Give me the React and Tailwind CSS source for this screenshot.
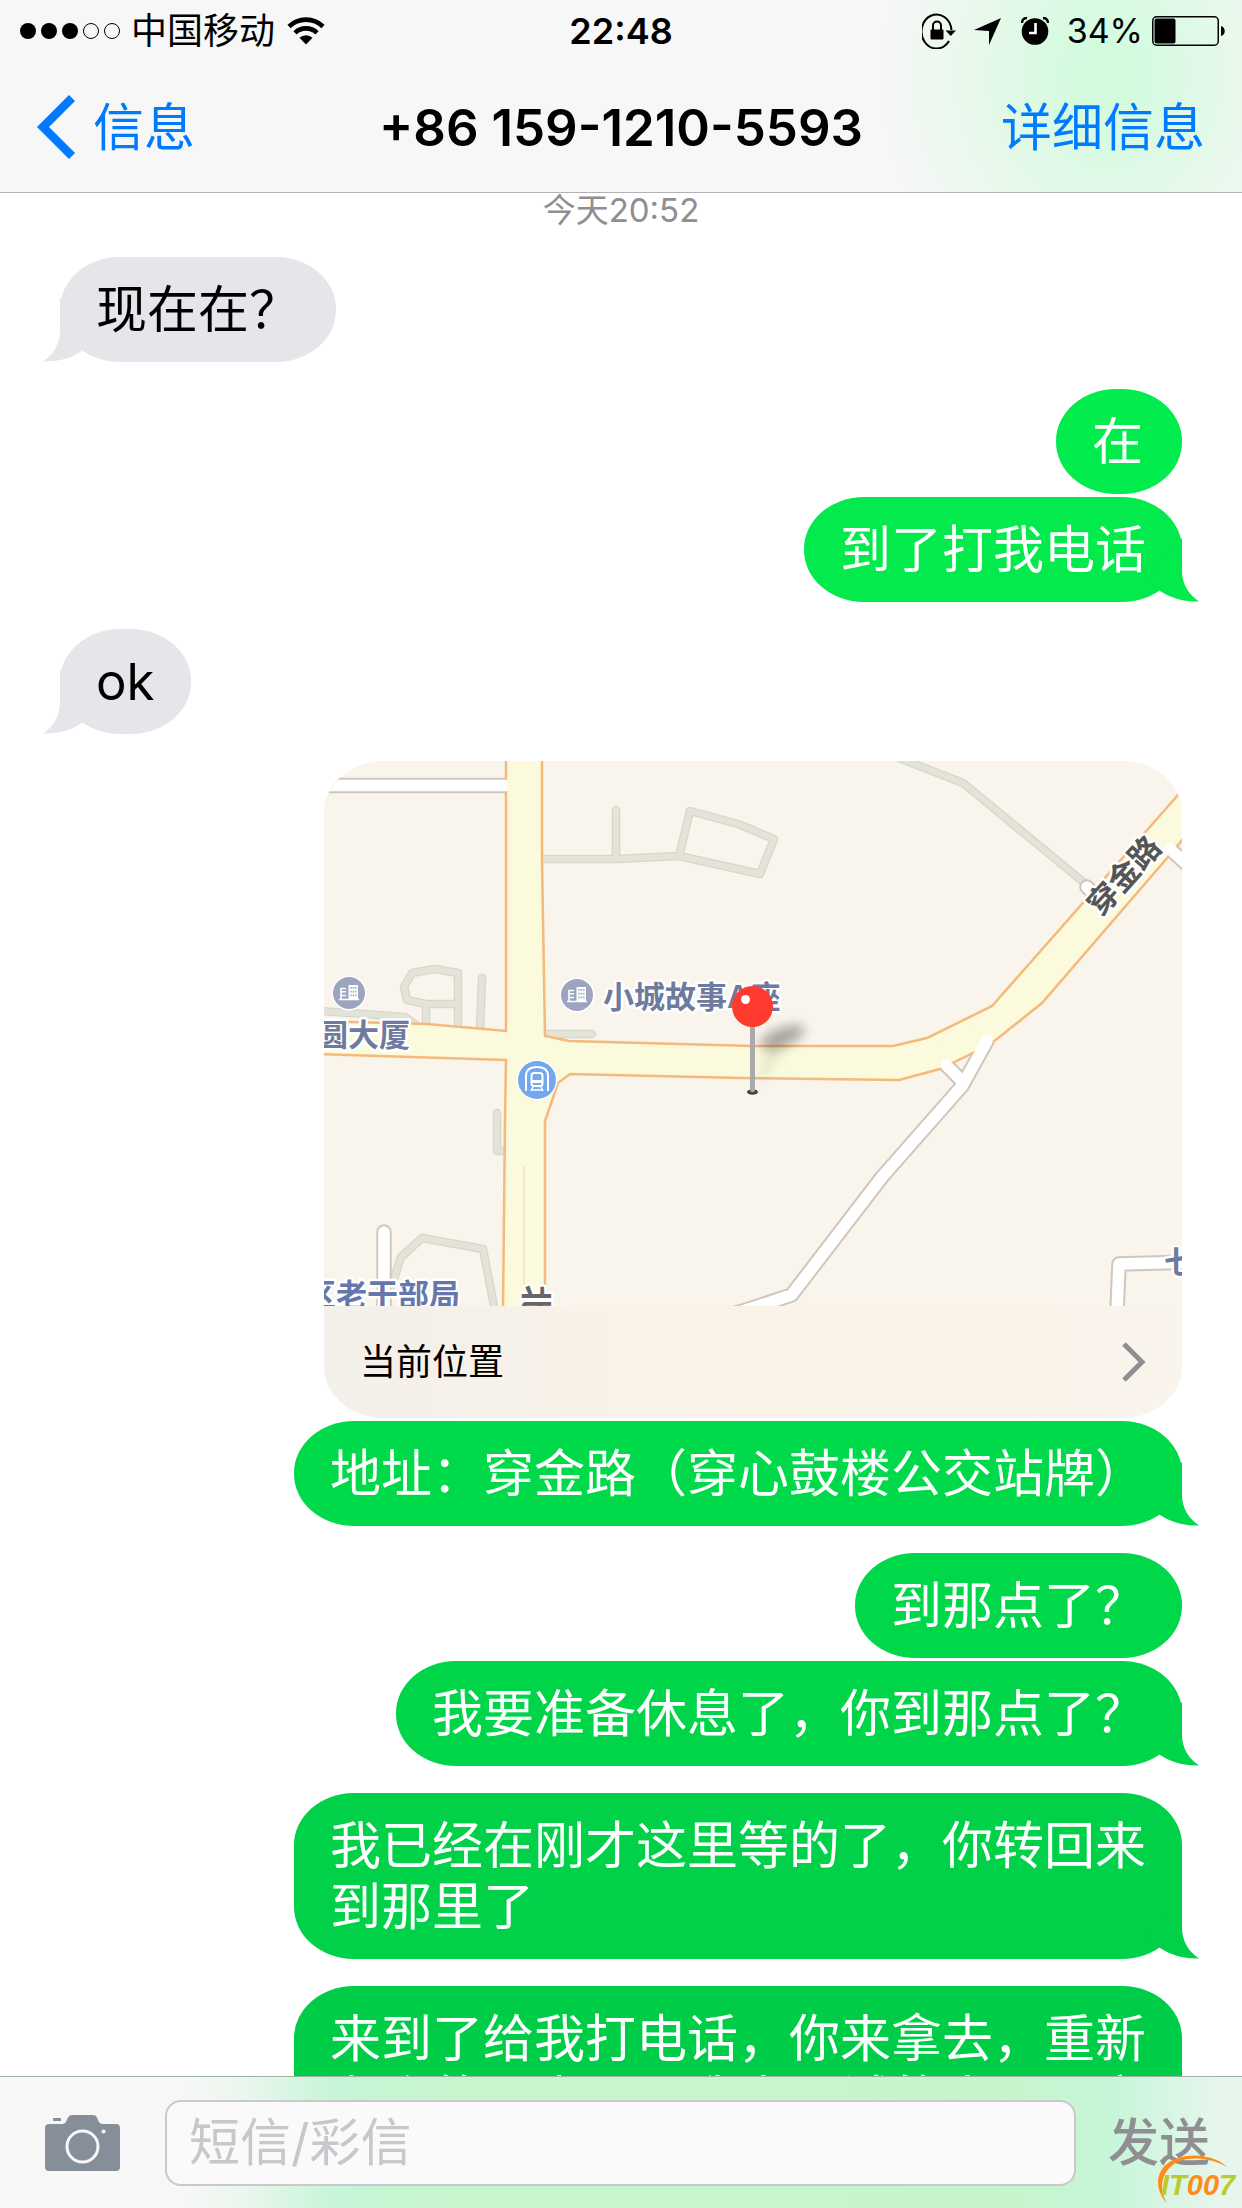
import { useState } from 'react';

const mensajes = [
  { id: 1, de: 'otro', texto: '现在在？', cola: true, color: 'text-[#e5e5ea]', margen: 'mt-[27px]' },
  { id: 2, de: 'yo', texto: '在', color: 'text-[#02ec4d]', margen: 'mt-[27px]' },
  { id: 3, de: 'yo', texto: '到了打我电话', cola: true, color: 'text-[#02ea4c]', margen: 'mt-[3px]' },
  { id: 4, de: 'otro', texto: 'ok', cola: true, color: 'text-[#e5e5ea]', margen: 'mt-[27px]' },
  { id: 5, de: 'yo', mapa: true, texto: '当前位置', margen: 'mt-[27px]' },
  { id: 6, de: 'yo', texto: '地址：穿金路（穿心鼓楼公交站牌）', cola: true, color: 'text-[#00da4a]', margen: 'mt-[3px]' },
  { id: 7, de: 'yo', texto: '到那点了？', color: 'text-[#00d749]', margen: 'mt-[27px]' },
  { id: 8, de: 'yo', texto: '我要准备休息了，你到那点了？', cola: true, color: 'text-[#00d549]', margen: 'mt-[3px]' },
  { id: 9, de: 'yo', texto: '我已经在刚才这里等的了，你转回来到那里了', cola: true, color: 'text-[#00d148]', margen: 'mt-[27px]' },
  { id: 10, de: 'yo', texto: '来到了给我打电话，你来拿去，重新在个的了点了，我来，试的来了，方', cola: true, color: 'text-[#00cd47]', margen: 'mt-[27px]' },
];

const StatusBar = () => (
  <div className="grid h-[62px] grid-cols-[1fr_auto_1fr] items-center px-[16px] text-[36px] leading-[44px]">
    <div className="flex items-center gap-[9px] pl-[4px]">
      <svg className="h-[18px] w-[102px]" viewBox="0 0 102 18">
        <circle cx="8" cy="9" r="8" />
        <circle cx="29" cy="9" r="8" />
        <circle cx="50" cy="9" r="8" />
        <circle cx="71" cy="9" r="7.5" fill="none" stroke="#000" />
        <circle cx="92" cy="9" r="7.5" fill="none" stroke="#000" />
      </svg>
      <span>中国移动</span>
      <svg className="ml-[3px] h-[28px] w-[38px]" viewBox="0 0 38 28" fill="none" stroke="#000" strokeWidth="4.6">
        <path d="M2 9.5a24.5 24.5 0 0 1 34 0" />
        <path d="M8 15.8a16 16 0 0 1 22 0" />
        <path d="M12.5 20.8a9.4 9.4 0 0 1 13 0L19 27.5z" fill="#000" stroke="none" />
      </svg>
    </div>
    <span className="font-semibold">22:48</span>
    <div className="flex items-center justify-end">
      <svg className="h-[36px] w-[34px]" viewBox="0 0 34 36">
        <path d="M27 28A15 17 0 1 1 29.5 17" fill="none" stroke="#000" strokeWidth="2" />
        <path d="M23.5 17.500h10.500l-5.200 5.500z" />
        <rect x="8.500" y="16.500" width="13" height="10" rx="1" />
        <path d="M11 17v-4.500a4 4 0 0 1 8 0v4.500" fill="none" stroke="#000" strokeWidth="2" />
      </svg>
      <svg className="ml-[18px] h-[27px] w-[27px]" viewBox="0 0 27 27">
        <path d="M27 0L15 27V13L0 12z" />
      </svg>
      <svg className="ml-[20px] h-[28px] w-[28px]" viewBox="0 0 28 28">
        <circle cx="14" cy="14.5" r="13.3" />
        <path d="M1 6C1 3 3 1 6 1M27 6C27 3 25 1 22 1" fill="none" stroke="#000" strokeWidth="2.5" />
        <path d="M14.5 6v10H8" fill="none" stroke="#fff" strokeWidth="2.6" />
      </svg>
      <span className="ml-[18px] text-[34px]">34%</span>
      <svg className="ml-[9px] h-[30px] w-[74px]" viewBox="0 0 74 30">
        <rect x="0.75" y="0.75" width="65.5" height="28.5" rx="4" fill="none" stroke="#000" strokeWidth="1.5" />
        <rect x="2.5" y="2.5" width="21" height="25" rx="2" />
        <path d="M69 10c5 1.5 5 9 0 10z" />
      </svg>
    </div>
  </div>
);

const Cola = ({ de }) => (
  <svg
    className={`absolute bottom-0 h-[64px] w-[52px] fill-current ${de === 'yo' ? 'right-[-18px]' : 'left-[-18px] -scale-x-100'}`}
    viewBox="0 0 52 64"
  >
    <path d="M34 0V33C34 46 41 57 51 63.5C36 64 23 60 12 53L0 40z" />
  </svg>
);

const Edificio = ({ x, y }) => (
  <g transform={`translate(${x} ${y})`}>
    <circle r="17.5" fill="#fff" />
    <circle r="16" fill="#9ca4bf" />
    <path d="M-10 6.5H10M-8 6V-4.500H-3M-8 -1.200H-3M-8 2.500H-3" stroke="#fff" strokeWidth="1.6" fill="none" />
    <rect x="-0.5" y="-8" width="9.500" height="15" fill="#fff" />
    <path d="M2 -6v9.5M4.400 -6v9.5M6.800 -6v9.5" stroke="#9ca4bf" strokeWidth="1.4" strokeDasharray="1.8 1.9" />
  </g>
);

const senderos =
  'M218 98H292L355 95L436 113L450 78L414 63L366 50L355 95M292 98V49' +
  'M575 -3L639 22L763 124' +
  'M134 268V212L111 208L88 212L80 226L83 239L102 243H134M102 243V265' +
  'M158 217L156 268M-2 250L81 256L92 264M222 273H268M173 352V390H181' +
  'M66 530L77 496L98 477L159 488L171 550';
const calles =
  'M-12 24.5H190M663 280L638 325L558 416L467.5 534L425 548L380 562M622 304L640 322' +
  'M763 126L776 139M846 88L870 110M60 550V471M793 550L795 503L870 501';
const avenida =
  'M182 -5V270L103 263L-5 260V293L182 299L181 359L179 550H221V360L234 322L246 313L416 317L575 319L616 308L653 290L673 278L718 242L844 96L870 65V16L854 34L668 245L603 277L569 285H429L245 280L221 275L218 100V-5z';

const Mapa = () => (
  <svg className="block w-full" viewBox="0 0 858 545">
    <defs>
      <filter id="sombra" x="-50%" y="-80%" width="200%" height="260%">
        <feGaussianBlur stdDeviation="6" />
      </filter>
    </defs>
    <rect width="858" height="545" fill="#f9f4ec" />
    <g fill="none" strokeLinejoin="round" strokeLinecap="round">
      <path d={senderos} stroke="#d8d6c7" strokeWidth="8.5" />
      <path d={senderos} stroke="#e4e3da" strokeWidth="6" />
      <path d={calles} stroke="#d0c6bd" strokeWidth="15.5" />
    </g>
    <path d={avenida} fill="#fbfadd" stroke="#f5b97a" strokeWidth="2.5" />
    <path d={calles} fill="none" stroke="#fff" strokeWidth="11.5" strokeLinejoin="round" strokeLinecap="round" />
    <path d="M184 12H216V40H184zM640 285L664 270L690 258L700 235L670 256L600 285z" fill="#fbfadd" />
    <path d="M200 405V545" stroke="#f6e3b8" strokeWidth="1.5" />

    <Edificio x={25} y={232} />
    <Edificio x={253} y={234} />
    <g transform="translate(213 319)" fill="none" stroke="#fff" strokeWidth="2">
      <circle r="20.5" fill="#fff" stroke="none" />
      <circle r="19" fill="#74a8ee" stroke="none" />
      <path d="M-11 11V-4C-11 -10 -7 -13 0 -13S11 -10 11 -4V11" />
      <rect x="-5.5" y="-7" width="11" height="13" rx="2.5" />
      <path d="M-5 1.5H5" strokeWidth="3" />
      <path d="M-4 7L-6 11M4 7L6 11M-5 10H5" strokeWidth="1.5" />
    </g>

    <g fontSize="31" fontWeight="600" fill="#6f7b9e" stroke="#fff" strokeWidth="5" strokeLinejoin="round" paintOrder="stroke">
      <text x="279" y="247">小城故事A座</text>
      <text x="-7" y="285">圆大厦</text>
      <text x="-19" y="545" fill="#6677ad">区老干部局</text>
      <text x="840" y="512">七</text>
      <text transform="translate(201 524) rotate(90)" fill="#666">北京路</text>
      <text transform="translate(808 122) rotate(-48)" textAnchor="middle" fill="#555">穿金路</text>
    </g>

    <ellipse cx="458" cy="276" rx="24" ry="9" transform="rotate(-20 458 276)" fill="#000" opacity="0.32" filter="url(#sombra)" />
    <path d="M430 328L446 285L466 280z" fill="#000" opacity="0.1" filter="url(#sombra)" />
    <ellipse cx="428.5" cy="331" rx="5.5" ry="2.8" fill="#444" />
    <rect x="426" y="262" width="5" height="69" rx="2" fill="#aaaaae" />
    <circle cx="428.5" cy="245.5" r="20.5" fill="#ff3b30" />
    <circle cx="421.5" cy="238.5" r="4.5" fill="#fff" />
  </svg>
);

const TarjetaMapa = ({ texto }) => (
  <a href="#mapa" className="block w-[858px] max-w-full overflow-hidden rounded-[60px/52px] bg-[#f9f4ec]">
    <Mapa />
    <div className="flex h-[112px] items-center justify-between bg-linear-to-r from-[#f3f0ea] via-[#fbf3e8] to-[#f9f4ec] px-[36px]">
      <span className="text-[36px] leading-[44px]">{texto}</span>
      <svg className="h-[40px] w-[24px]" viewBox="0 0 24 40" fill="none" stroke="#8e8e93" strokeWidth="5">
        <path d="M2 2L20 20L2 38" />
      </svg>
    </div>
  </a>
);

const Burbuja = ({ m }) => (
  <div className={`relative max-w-[888px] min-w-[126px] rounded-[60px/52px] bg-current px-[36px] py-[22px] ${m.color}`}>
    <p className={`text-[51px] leading-[61px] ${m.de === 'yo' ? 'text-white' : 'text-black'}`}>{m.texto}</p>
    {m.cola && <Cola de={m.de} />}
  </div>
);

const App = () => {
  const [borrador, setBorrador] = useState('');

  return (
    <div className="flex h-screen flex-col overflow-hidden bg-white font-[Inter,'Noto_Sans_CJK_SC',sans-serif] text-black" lang="zh-CN">
      <header className="shrink-0 border-b border-[#b2b2b2] bg-[#f7f7f7] bg-[radial-gradient(230px_260px_at_89%_75px,#d2fbde_10%,#e4f9e9_50%,#f7f7f700)]">
        <StatusBar />
        <nav className="grid h-[130px] grid-cols-[1fr_auto_1fr] items-center px-[37px] text-[51px] leading-[61px]">
          <a href="#lista" className="flex items-center gap-[17px] text-[#007aff]">
            <svg className="h-[64px] w-[39px]" viewBox="0 0 39 64" fill="none" stroke="currentColor" strokeWidth="8.5">
              <path d="M35 3L6 32L35 61" />
            </svg>
            信息
          </a>
          <h1 className="font-semibold">+86 159-1210-5593</h1>
          <a href="#detalles" className="justify-self-end text-[#007aff]">详细信息</a>
        </nav>
      </header>

      <main className="min-h-0 flex-1 overflow-hidden pr-[60px] pl-[60px]">
        <p className="h-[37px] text-center text-[33px] leading-[35px] text-[#8e8e93]">今天20:52</p>
        {mensajes.map((m) => (
          <div key={m.id} className={`flex ${m.margen} ${m.de === 'yo' ? 'justify-end' : 'justify-start'}`}>
            {m.mapa ? <TarjetaMapa texto={m.texto} /> : <Burbuja m={m} />}
          </div>
        ))}
      </main>

      <form
        className="relative flex h-[132px] shrink-0 items-center border-t border-[#9fb0a5] bg-[linear-gradient(to_right,#f7f7f7_15%,#e9f6ec_20%,#c6f5d8_27%,#c7f5cf_34%,#c7f5cb_80%,#c6f5d8_89%,#e6f6ec_98%)] pr-[32px] pl-[45px]"
        onSubmit={(e) => e.preventDefault()}
      >
        <button type="button" aria-label="相机">
          <svg className="h-[56px] w-[75px]" viewBox="0 0 75 56" fill="#868e99">
            <path d="M4 9H17C20.500 9 21 6.500 22.500 3.500C23.500 1 25 0 28 0H47C50 0 51.500 1 52.500 3.500C53.500 6.500 54.500 9 58 9H71Q75 9 75 13V52Q75 56 71 56H4Q0 56 0 52V13Q0 9 4 9z" />
            <rect x="8" y="3" width="8" height="3" rx="0.5" />
            <circle cx="37.5" cy="31.5" r="15.5" fill="none" stroke="#f7f7f7" strokeWidth="3" />
            <circle cx="58.5" cy="16.5" r="2" fill="#f7f7f7" />
          </svg>
        </button>
        <input
          type="text"
          aria-label="短信/彩信"
          placeholder="短信/彩信"
          value={borrador}
          onChange={(e) => setBorrador(e.target.value)}
          className="ml-[45px] h-[86px] min-w-0 flex-1 rounded-[16px] border-2 border-[#c8c8cd] bg-[#fafafa] px-[22px] text-[51px] leading-[61px] outline-none placeholder:text-[#c7c7cc]"
        />
        <button type="submit" className="ml-[32px] text-[51px] leading-[61px] font-medium text-[#8e8e93]">发送</button>
        <svg className="absolute right-0 bottom-0 h-[56px] w-[88px]" viewBox="0 0 88 56" aria-hidden="true">
          <path d="M13 51C-5 32 4 3 42 3.500C56 4 67 9 73 15C65 10 54 7 42 6.500C11 6 1 32 13 51z" fill="#ff8c1a" />
          <text x="7" y="43" fontSize="29" fontWeight="700" fontStyle="italic" fontFamily="Liberation Sans, sans-serif" fill="#b9cc2c">
            IT<tspan fill="#ff8c1a">00</tspan>7
          </text>
        </svg>
      </form>
    </div>
  );
};

export default App;
